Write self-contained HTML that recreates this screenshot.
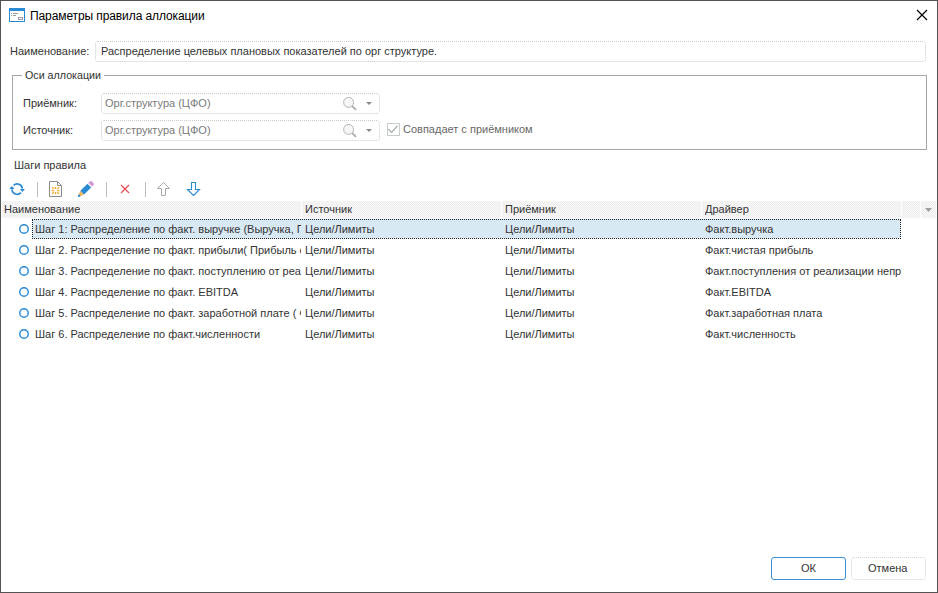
<!DOCTYPE html>
<html><head><meta charset="utf-8">
<style>
*{margin:0;padding:0;box-sizing:border-box}
html,body{width:938px;height:593px;overflow:hidden;background:#fff}
body{position:relative;font-family:"Liberation Sans",sans-serif;font-size:11px;color:#333}
.a{position:absolute;white-space:nowrap}
.t{position:absolute;white-space:nowrap;line-height:13px;height:13px}
#frame{position:absolute;left:0;top:0;width:938px;height:593px;border:1px solid #535353}
.inp{position:absolute;border:1px dotted #cdcdcd;border-radius:3px;background:#fff}
.hdr{position:absolute;top:201px;height:17px;background:repeating-conic-gradient(#eeeeee 0 25%,#f8f8f8 0 50%) 0 0/2px 2px}
.cell{position:absolute;white-space:nowrap;overflow:hidden;line-height:13px;height:13px;color:#333}
.circ{position:absolute;width:10px;height:10px;border:1.8px solid #2a8ad4;border-radius:50%}
.sep{position:absolute;top:182px;width:1px;height:15px;background:#bdbdbd}
</style></head><body>
<div id="frame"></div>

<!-- title -->
<svg class="a" style="left:9px;top:8px" width="16" height="14" viewBox="0 0 16 14">
  <rect x="0.5" y="0.5" width="15" height="13" fill="#fff" stroke="#2a8ad4" stroke-width="1"/>
  <rect x="0" y="0" width="16" height="3" fill="#2a8ad4"/>
  <rect x="2" y="5" width="1" height="1" fill="#9a9a9a"/>
  <rect x="4" y="5" width="5" height="1" fill="#9a9a9a"/>
  <rect x="2" y="7" width="1" height="1" fill="#9a9a9a"/>
  <rect x="4" y="7" width="3" height="1" fill="#9a9a9a"/>
  <rect x="9.5" y="9.5" width="4" height="2" fill="none" stroke="#9a9a9a" stroke-width="1"/>
</svg>
<div class="t" style="left:30px;top:9px;font-size:12px;letter-spacing:-0.1px;color:#000;line-height:14px;height:14px">Параметры правила аллокации</div>
<svg class="a" style="left:916px;top:9px" width="12" height="12" viewBox="0 0 12 12">
  <path d="M1 1L11 11M11 1L1 11" stroke="#000" stroke-width="1.2" fill="none"/>
</svg>

<!-- name -->
<div class="t" style="left:10px;top:45px">Наименование:</div>
<svg class="a" style="left:95px;top:41px" width="831" height="21" viewBox="0 0 831 21"><rect x="0.5" y="0.5" width="830" height="20" rx="2.5" fill="none" stroke="#cacaca" stroke-dasharray="1 1"/></svg>
<div class="t" style="left:101px;top:45px">Распределение целевых плановых показателей по орг структуре.</div>

<!-- group -->
<div class="a" style="left:12px;top:75px;width:915px;height:75px;border:1px solid #a6a6a6"></div>
<div class="t" style="left:22px;top:69px;padding:0 3px;background:#fff;font-size:10.7px">Оси аллокации</div>

<div class="t" style="left:23px;top:97px">Приёмник:</div>
<svg class="a" style="left:101px;top:93px" width="279" height="21" viewBox="0 0 279 21"><rect x="0.5" y="0.5" width="278" height="20" rx="2.5" fill="none" stroke="#cacaca" stroke-dasharray="1 1"/></svg>
<div class="t" style="left:105px;top:97px;color:#7a7a7a">Орг.структура (ЦФО)</div>
<svg class="a" style="left:343px;top:97px" width="14" height="14" viewBox="0 0 14 14">
  <circle cx="5.6" cy="5.4" r="5" fill="#f6f6f6" stroke="#b4b4b4" stroke-width="1"/>
  <path d="M9.2 9.1L13 12.9" stroke="#aaaaaa" stroke-width="1.8"/>
</svg>
<svg class="a" style="left:365px;top:101px" width="8" height="5" viewBox="0 0 8 5"><path d="M1 1H7L4 4Z" fill="#8a8a8a"/></svg>

<div class="t" style="left:23px;top:124px">Источник:</div>
<svg class="a" style="left:101px;top:120px" width="279" height="21" viewBox="0 0 279 21"><rect x="0.5" y="0.5" width="278" height="20" rx="2.5" fill="none" stroke="#cacaca" stroke-dasharray="1 1"/></svg>
<div class="t" style="left:105px;top:124px;color:#7a7a7a">Орг.структура (ЦФО)</div>
<svg class="a" style="left:343px;top:124px" width="14" height="14" viewBox="0 0 14 14">
  <circle cx="5.6" cy="5.4" r="5" fill="#f6f6f6" stroke="#b4b4b4" stroke-width="1"/>
  <path d="M9.2 9.1L13 12.9" stroke="#aaaaaa" stroke-width="1.8"/>
</svg>
<svg class="a" style="left:365px;top:128px" width="8" height="5" viewBox="0 0 8 5"><path d="M1 1H7L4 4Z" fill="#8a8a8a"/></svg>

<svg class="a" style="left:387px;top:123px" width="13" height="13" viewBox="0 0 13 13">
  <rect x="0.5" y="0.5" width="12" height="12" fill="#fff" stroke="#c6cdce"/>
  <path d="M1.3 5.9L4.6 9.3L10.6 2.6" stroke="#a6a6a6" stroke-width="1.15" fill="none"/>
</svg>
<div class="t" style="left:403px;top:123px;color:#686868">Совпадает с приёмником</div>

<!-- steps -->
<div class="t" style="left:14px;top:159px">Шаги правила</div>

<!-- toolbar -->
<svg class="a" style="left:6px;top:178px" width="24" height="22" viewBox="0 0 24 22">
  <path d="M7.6 7.4A5.25 5.25 0 0 1 16.4 10.6" stroke="#2a8ad4" stroke-width="1.6" fill="none"/>
  <path d="M15.0 14.6A5.25 5.25 0 0 1 5.9 11.4" stroke="#2a8ad4" stroke-width="1.6" fill="none"/>
  <path d="M13.9 11.0H18.9L16.4 14.1Z" fill="#2a8ad4"/>
  <path d="M3.3 11.1H8.4L5.85 8.0Z" fill="#2a8ad4"/>
</svg>
<div class="sep" style="left:37px"></div>
<svg class="a" style="left:49px;top:181px" width="13" height="16" viewBox="0 0 13 16">
  <path d="M0.5 0.5H8.5L12.5 4.5V15.5H0.5Z" fill="#fff" stroke="#8c8c8c"/>
  <path d="M8.5 0.5V4.5H12.5" fill="none" stroke="#8c8c8c"/>
  <g stroke="#f5a623" stroke-width="1.25" fill="none"><path d="M6.6 5.9V8.1M6.6 11V13.2M2.7 9.5H5.1M8.1 9.5H10.4M3.1 6.2L4.9 7.9M10.1 6.2L8.3 7.9M3.1 12.9L4.9 11.2M10.1 12.9L8.3 11.2"/></g>
</svg>
<svg class="a" style="left:76px;top:179px" width="20" height="20" viewBox="0 0 20 20">
  <path d="M2.23 16.82 L4.35 11.87 L8.03 15.55 L3.08 17.67Z" fill="#f3b75c"/>
  <path d="M2.02 17.32 L1.88 16.61 L3.01 15.20 L4.70 16.89 L3.29 18.02 L2.58 17.88Z" fill="#2a8ad4"/>
  <path d="M4.35 11.87 L11.49 4.73 L15.17 8.41 L8.03 15.55Z" fill="#2a8ad4"/>
  <path d="M11.49 4.73 L12.48 3.74 L16.16 7.42 L15.17 8.41Z" fill="#e6e6e6"/>
  <path d="M12.48 3.74 L14.32 1.90 L15.52 1.97 L17.93 4.38 L18.00 5.58 L16.16 7.42Z" fill="#d49ad8"/>
</svg>
<div class="sep" style="left:106px"></div>
<svg class="a" style="left:120px;top:184px" width="10" height="10" viewBox="0 0 10 10">
  <path d="M1 1L9 9M9 1L1 9" stroke="#e6444f" stroke-width="1.1" fill="none"/>
</svg>
<div class="sep" style="left:145px"></div>
<svg class="a" style="left:156px;top:181px" width="15" height="16" viewBox="0 0 15 16">
  <path d="M7.5 1.5L13.5 7.5H9.5V14.5H5.5V7.5H1.5Z" fill="#fff" stroke="#a8a8a8" stroke-width="1" stroke-linejoin="miter"/>
</svg>
<svg class="a" style="left:186px;top:181px" width="15" height="16" viewBox="0 0 15 16">
  <path d="M7.5 14.5L13.5 8.5H9.5V1.5H5.5V8.5H1.5Z" fill="#fff" stroke="#2a8ad4" stroke-width="1.1" stroke-linejoin="miter"/>
</svg>

<!-- grid header -->
<div class="hdr" style="left:2px;width:299px"></div>
<div class="hdr" style="left:302px;width:199px"></div>
<div class="hdr" style="left:502px;width:199px"></div>
<div class="hdr" style="left:702px;width:199px"></div>
<div class="hdr" style="left:902px;width:18px"></div>
<div class="hdr" style="left:921px;width:15px"></div>
<div class="cell" style="left:4px;top:203px">Наименование</div>
<div class="cell" style="left:305px;top:203px">Источник</div>
<div class="cell" style="left:505px;top:203px">Приёмник</div>
<div class="cell" style="left:705px;top:203px">Драйвер</div>
<svg class="a" style="left:925px;top:208px" width="7" height="4" viewBox="0 0 7 4"><path d="M0 0H7L3.5 4Z" fill="#a0a0a0"/></svg>

<!-- selection -->
<div class="a" style="left:32px;top:219px;width:869px;height:20px;background:repeating-conic-gradient(#cfe6f6 0 25%,#e2ebf2 0 50%) 0 0/2px 2px;border:1px dotted #222"></div>

<svg class="a" style="left:19px;top:224px" width="10" height="10" viewBox="0 0 10 10"><circle cx="5" cy="5" r="4.25" fill="none" stroke="#2a8ad4" stroke-width="1.45"/></svg>
<div class="cell" style="left:35px;top:223px;width:266px">Шаг 1: Распределение по факт. выручке (Выручка, Прибыль</div>
<div class="cell" style="left:305px;top:223px;width:196px">Цели/Лимиты</div>
<div class="cell" style="left:505px;top:223px;width:196px">Цели/Лимиты</div>
<div class="cell" style="left:705px;top:223px;width:196px">Факт.выручка</div>
<svg class="a" style="left:19px;top:245px" width="10" height="10" viewBox="0 0 10 10"><circle cx="5" cy="5" r="4.25" fill="none" stroke="#2a8ad4" stroke-width="1.45"/></svg>
<div class="cell" style="left:35px;top:244px;width:266px">Шаг 2. Распределение по факт. прибыли( Прибыль от продаж)</div>
<div class="cell" style="left:305px;top:244px;width:196px">Цели/Лимиты</div>
<div class="cell" style="left:505px;top:244px;width:196px">Цели/Лимиты</div>
<div class="cell" style="left:705px;top:244px;width:196px">Факт.чистая прибыль</div>
<svg class="a" style="left:19px;top:266px" width="10" height="10" viewBox="0 0 10 10"><circle cx="5" cy="5" r="4.25" fill="none" stroke="#2a8ad4" stroke-width="1.45"/></svg>
<div class="cell" style="left:35px;top:265px;width:266px">Шаг 3. Распределение по факт. поступлению от реализации</div>
<div class="cell" style="left:305px;top:265px;width:196px">Цели/Лимиты</div>
<div class="cell" style="left:505px;top:265px;width:196px">Цели/Лимиты</div>
<div class="cell" style="left:705px;top:265px;width:196px">Факт.поступления от реализации непрофильных активов</div>
<svg class="a" style="left:19px;top:287px" width="10" height="10" viewBox="0 0 10 10"><circle cx="5" cy="5" r="4.25" fill="none" stroke="#2a8ad4" stroke-width="1.45"/></svg>
<div class="cell" style="left:35px;top:286px;width:266px">Шаг 4. Распределение по факт. EBITDA</div>
<div class="cell" style="left:305px;top:286px;width:196px">Цели/Лимиты</div>
<div class="cell" style="left:505px;top:286px;width:196px">Цели/Лимиты</div>
<div class="cell" style="left:705px;top:286px;width:196px">Факт.EBITDA</div>
<svg class="a" style="left:19px;top:308px" width="10" height="10" viewBox="0 0 10 10"><circle cx="5" cy="5" r="4.25" fill="none" stroke="#2a8ad4" stroke-width="1.45"/></svg>
<div class="cell" style="left:35px;top:307px;width:266px">Шаг 5. Распределение по факт. заработной плате ( ФОТ)</div>
<div class="cell" style="left:305px;top:307px;width:196px">Цели/Лимиты</div>
<div class="cell" style="left:505px;top:307px;width:196px">Цели/Лимиты</div>
<div class="cell" style="left:705px;top:307px;width:196px">Факт.заработная плата</div>
<svg class="a" style="left:19px;top:329px" width="10" height="10" viewBox="0 0 10 10"><circle cx="5" cy="5" r="4.25" fill="none" stroke="#2a8ad4" stroke-width="1.45"/></svg>
<div class="cell" style="left:35px;top:328px;width:266px">Шаг 6. Распределение по факт.численности</div>
<div class="cell" style="left:305px;top:328px;width:196px">Цели/Лимиты</div>
<div class="cell" style="left:505px;top:328px;width:196px">Цели/Лимиты</div>
<div class="cell" style="left:705px;top:328px;width:196px">Факт.численность</div>

<!-- buttons -->
<div class="a" style="left:771px;top:557px;width:75px;height:23px;border:1px solid #3a8fd6;border-radius:3px"></div>
<div class="t" style="left:801px;top:562px">ОК</div>
<svg class="a" style="left:851px;top:557px" width="75" height="23" viewBox="0 0 75 23"><rect x="0.5" y="0.5" width="74" height="22" rx="2.5" fill="none" stroke="#d2d2d2" stroke-dasharray="1 1"/></svg>
<div class="t" style="left:868px;top:562px">Отмена</div>

</body></html>
